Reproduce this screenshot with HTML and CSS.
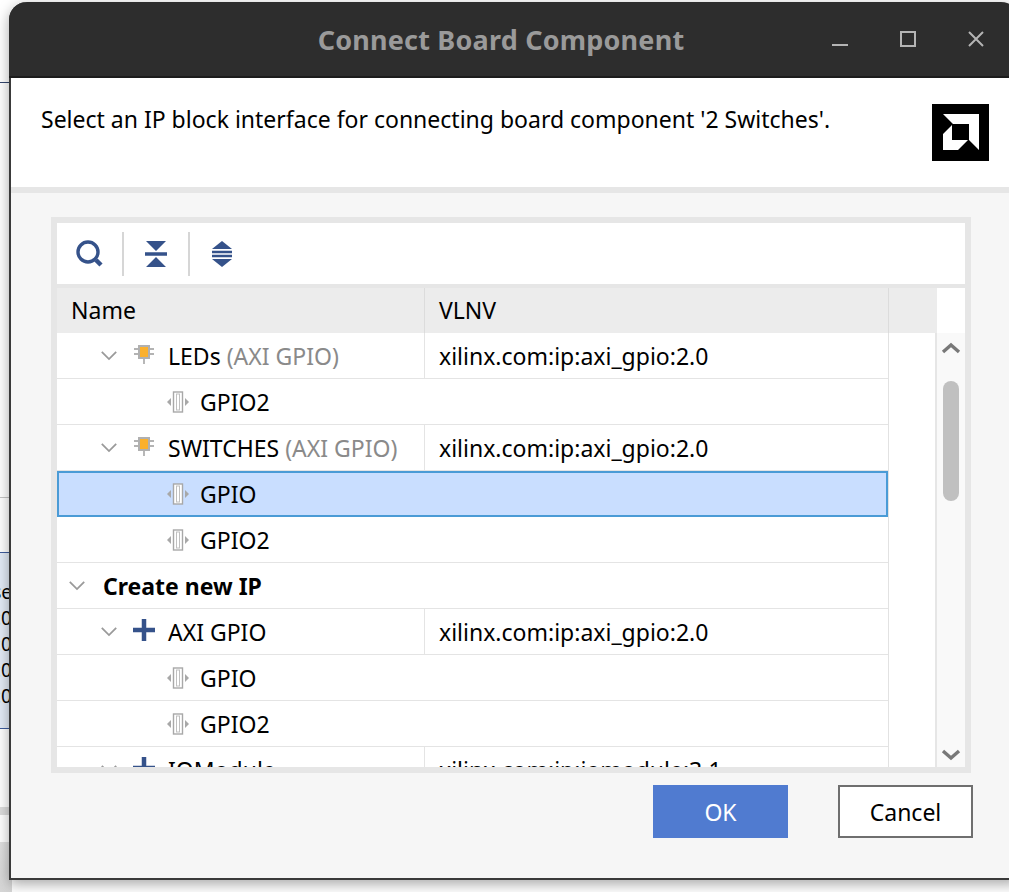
FILE: index.html
```html
<!DOCTYPE html>
<html lang="en">
<head>
<meta charset="utf-8">
<title>Connect Board Component</title>
<link rel="stylesheet" href="styles.css">
</head>
<body>
<svg width="0" height="0" class="defs">
  <defs>
    <symbol id="chev" viewBox="0 0 20 12"><path d="M2 2l8 8 8-8" fill="none" stroke="#9a9a9a" stroke-width="2"/></symbol>
    <symbol id="ipblock" viewBox="0 0 22 20"><path d="M1 5h5M1 10h5M16 5h5M16 10h5M11 15v5" stroke="#9a9a9a" stroke-width="1.4" fill="none"/><rect x="5" y="1" width="12" height="14" fill="#b0b0b0"/><rect x="7" y="3" width="8" height="10" fill="#fbb02c"/></symbol>
    <symbol id="port" viewBox="0 0 22 22"><rect x="6.5" y="1" width="9" height="20" fill="#fff" stroke="#a8a8a8" stroke-width="1.4"/><rect x="9.5" y="3" width="3" height="16" fill="#fff" stroke="#c0c0c0" stroke-width="1"/><path d="M0 11l4-4v8zM22 11l-4-4v8z" fill="#a8a8a8"/></symbol>
    <symbol id="plus" viewBox="0 0 22 22"><path d="M0 11h22M11 0v22" stroke="#35528a" stroke-width="4.5" fill="none"/></symbol>
  </defs>
</svg>

<div class="backdrop">
  <div class="bd-line-top"></div>
  <div class="bd-vline"></div>
  <div class="bd-panel"><span>se</span><span>:0</span><span>:0</span><span>:0</span><span>:0</span></div>
  <div class="bd-stripe"></div>
  <div class="bd-stripe2"></div>
</div>

<main class="dialog">
  <header class="titlebar">
    <h1 class="title">Connect Board Component</h1>
    <div class="win-controls">
      <svg class="wc" viewBox="0 0 18 18"><path d="M1 15h16" stroke="#b4b4b4" stroke-width="2"/></svg>
      <svg class="wc" viewBox="0 0 18 18"><rect x="2" y="2" width="14" height="14" fill="none" stroke="#b4b4b4" stroke-width="2"/></svg>
      <svg class="wc" viewBox="0 0 18 18"><path d="M2 2l14 14M16 2L2 16" stroke="#b4b4b4" stroke-width="2"/></svg>
    </div>
  </header>

  <section class="banner">
    <p class="banner-text">Select an IP block interface for connecting board component '2 Switches'.</p>
    <svg class="logo" viewBox="0 0 57 57">
      <rect width="57" height="57" fill="#000"/>
      <path d="M11 10h36v36L37 36V20H21z" fill="#fff"/>
      <path d="M20 21v15h16l-10 10H11V30z" fill="#fff"/>
    </svg>
  </section>

  <section class="content">
    <div class="panel">
      <div class="toolbar">
        <svg class="tool" viewBox="0 0 28 28"><circle cx="12" cy="12" r="10" fill="none" stroke="#35528a" stroke-width="3.4"/><path d="M20 20l5 5" stroke="#35528a" stroke-width="4.5"/></svg>
        <span class="tool-sep"></span>
        <svg class="tool" viewBox="0 0 28 28"><path d="M4 1h20L14 11zM4 27h20L14 17z" fill="#35528a"/><path d="M3 14h22" stroke="#35528a" stroke-width="3.5"/></svg>
        <span class="tool-sep"></span>
        <svg class="tool" viewBox="0 0 28 28"><path d="M14 1l10 8H4zM14 27l10-8H4z" fill="#35528a"/><path d="M4 12h20M4 16h20" stroke="#35528a" stroke-width="2.6"/></svg>
      </div>

      <div class="table-head">
        <div class="th th-name">Name</div>
        <div class="th th-vlnv">VLNV</div>
        <div class="th th-blank"></div>
        <div class="th-corner"></div>
      </div>

      <div class="table-body">
        <div class="rows">
          <div class="row">
            <div class="cell-name lvl1"><svg class="chev"><use href="#chev"/></svg><svg class="ico"><use href="#ipblock"/></svg><span>LEDs <em>(AXI GPIO)</em></span></div>
            <div class="cell-vlnv">xilinx.com:ip:axi_gpio:2.0</div>
          </div>
          <div class="row"><div class="cell-name lvl2"><svg class="port"><use href="#port"/></svg><span>GPIO2</span></div></div>
          <div class="row">
            <div class="cell-name lvl1"><svg class="chev"><use href="#chev"/></svg><svg class="ico"><use href="#ipblock"/></svg><span>SWITCHES <em>(AXI GPIO)</em></span></div>
            <div class="cell-vlnv">xilinx.com:ip:axi_gpio:2.0</div>
          </div>
          <div class="row selected"><div class="cell-name lvl2"><svg class="port"><use href="#port"/></svg><span>GPIO</span></div></div>
          <div class="row"><div class="cell-name lvl2"><svg class="port"><use href="#port"/></svg><span>GPIO2</span></div></div>
          <div class="row"><div class="cell-name lvl0"><svg class="chev"><use href="#chev"/></svg><strong>Create new IP</strong></div></div>
          <div class="row">
            <div class="cell-name lvl1"><svg class="chev"><use href="#chev"/></svg><svg class="ico"><use href="#plus"/></svg><span>AXI GPIO</span></div>
            <div class="cell-vlnv">xilinx.com:ip:axi_gpio:2.0</div>
          </div>
          <div class="row"><div class="cell-name lvl2"><svg class="port"><use href="#port"/></svg><span>GPIO</span></div></div>
          <div class="row"><div class="cell-name lvl2"><svg class="port"><use href="#port"/></svg><span>GPIO2</span></div></div>
          <div class="row">
            <div class="cell-name lvl1"><svg class="chev"><use href="#chev"/></svg><svg class="ico"><use href="#plus"/></svg><span>IOModule</span></div>
            <div class="cell-vlnv">xilinx.com:ip:iomodule:3.1</div>
          </div>
        </div>
        <div class="filler"></div>
        <div class="scrollbar">
          <svg class="arrow" viewBox="0 0 20 12"><path d="M2 10l8-7 8 7" fill="none" stroke="#787878" stroke-width="3.4"/></svg>
          <div class="thumb"></div>
          <svg class="arrow arrow-down" viewBox="0 0 20 12"><path d="M2 2l8 7 8-7" fill="none" stroke="#787878" stroke-width="3.4"/></svg>
        </div>
      </div>
    </div>

    <div class="actions">
      <button class="btn btn-ok">OK</button>
      <button class="btn btn-cancel">Cancel</button>
    </div>
  </section>
</main>
</body>
</html>
```
FILE: styles.css
```css
* { box-sizing: border-box; }
html, body { margin: 0; padding: 0; }
body {
  width: 1009px;
  height: 892px;
  overflow: hidden;
  position: relative;
  background: #f2f2f2;
  font-family: "Noto Sans", sans-serif;
  font-size: 23px;
  color: #000;
}
.defs { position: absolute; }

.backdrop { position: absolute; inset: 0; background: #fff; }
.bd-line-top { position: absolute; left: 0; top: 82px; width: 12px; height: 1px; background: #33466e; }
.bd-vline { position: absolute; left: 0; top: 497px; width: 12px; height: 1px; background: #c4c4c4; }
.bd-panel {
  position: absolute; left: 0; top: 552px; width: 12px; height: 177px;
  background: #e3ebf6;
  border-top: 1px solid #3e5c9c; border-bottom: 1px solid #3e5c9c;
  display: flex; flex-direction: column; align-items: flex-end;
  padding-top: 26px; font-size: 19px; line-height: 26px;
  overflow: hidden;
}
.bd-stripe { position: absolute; left: 0; top: 807px; width: 12px; height: 8px; background: #dcdcdc; }
.bd-stripe2 { position: absolute; left: 0; top: 842px; width: 12px; height: 50px; background: linear-gradient(#e0e0e0, #d6d6d6); }

.dialog {
  position: absolute;
  left: 9px; top: 2px;
  width: 1010px; height: 878px;
  background: #f6f6f6;
  border: 2px solid #3a3a3a;
  border-top: 0; border-right: 0;
  border-radius: 18px 18px 0 0;
  box-shadow: 0 4px 14px rgba(0,0,0,.35);
  display: flex; flex-direction: column;
}
.titlebar {
  height: 76px;
  flex: none;
  margin-left: -2px;
  background: #2d2d2d;
  border-bottom: 2px solid #1c1c1c;
  border-radius: 18px 18px 0 0;
  position: relative;
  display: flex; align-items: center; justify-content: center;
}
.title { margin: 0 12px 0 0; color: #9a9a9a; font-size: 27px; font-weight: 700; letter-spacing: .2px; padding-right: 14px; }
.win-controls { position: absolute; right: 9px; top: 0; height: 74px; display: flex; align-items: center; gap: 50px; padding-right: 25px; }
.wc { width: 18px; height: 18px; display: block; }

.banner {
  height: 115px; flex: none; background: #fff;
  border-bottom: 6px solid #e6e6e6;
  display: flex; justify-content: space-between; align-items: flex-start;
  padding: 26px 30px 0 30px;
}
.banner-text { margin: 0; line-height: 31px; }
.logo { width: 57px; height: 57px; display: block; flex: none; }

.content { flex: 1; padding: 24px 38px 0 40px; display: flex; flex-direction: column; }
.panel { width: 920px; height: 556px; flex: none; border: 6px solid #e6e6e6; background: #fff; display: flex; flex-direction: column; }
.toolbar { height: 61px; flex: none; display: flex; align-items: center; padding-left: 19px; background: #fff; border-bottom: 4px solid #e6e6e6; height: 65px; }
.tool { width: 28px; height: 28px; display: block; flex: none; }
.tool-sep { width: 2px; height: 44px; background: #d6d6d6; margin: 0 18px; }

.table-head { height: 45px; flex: none; display: flex; }
.th { background: #ececec; padding-left: 14px; line-height: 45px; border-right: 1px solid #dcdcdc; }
.th-name { width: 368px; }
.th-vlnv { width: 464px; }
.th-blank { width: 48px; border-right: 0; }
.th-corner { flex: 1; background: #fff; }

.table-body { flex: 1; min-height: 0; display: flex; overflow: hidden; }
.rows { width: 832px; flex: none; border-right: 1px solid #e2e2e2; overflow: hidden; }
.row { height: 46px; display: flex; align-items: center; border-bottom: 1px solid #e4e4e4; background: #fff; }
.row.selected { background: #c9deff; outline: 2px solid #4a9bd6; outline-offset: -2px; border-bottom: 0; }
.cell-name { width: 368px; height: 100%; display: flex; align-items: center; flex: none; }
.row:has(.cell-vlnv) .cell-name { border-right: 1px solid #e4e4e4; }
.cell-vlnv { padding-left: 14px; }
.lvl0 { padding-left: 11px; }
.lvl1 { padding-left: 43px; }
.lvl2 { padding-left: 110px; }
.lvl2 { white-space: nowrap; }
.chev { width: 18px; height: 11px; flex: none; }
.lvl1 .chev { margin-right: 15px; }
.lvl0 .chev { margin-right: 17px; }
.ico { width: 22px; height: 22px; flex: none; margin-right: 13px; margin-top: -4px; }
.port { width: 22px; height: 22px; flex: none; margin-right: 11px; }
em { font-style: normal; color: #8a8a8a; }
strong { font-weight: 700; }

.filler { width: 48px; flex: none; background: #fff; border-right: 2px solid #e6e6e6; }
.scrollbar { flex: 1; background: #f9f9f9; display: flex; flex-direction: column; align-items: center; position: relative; }
.arrow { width: 20px; height: 12px; margin-top: 9px; flex: none; }
.thumb { width: 16px; height: 120px; border-radius: 8px; background: #c0c0c0; margin-top: 27px; }
.arrow-down { margin-top: auto; margin-bottom: 6px; }

.actions { display: flex; justify-content: flex-end; gap: 50px; padding-right: 8px; margin-top: 12px; }
.btn { width: 135px; height: 53px; font: inherit; padding: 0; border-radius: 0; }
.btn-ok { background: #507bd0; color: #fff; border: 0; }
.btn-cancel { background: #fff; color: #000; border: 2px solid #6f6f6f; }
```
